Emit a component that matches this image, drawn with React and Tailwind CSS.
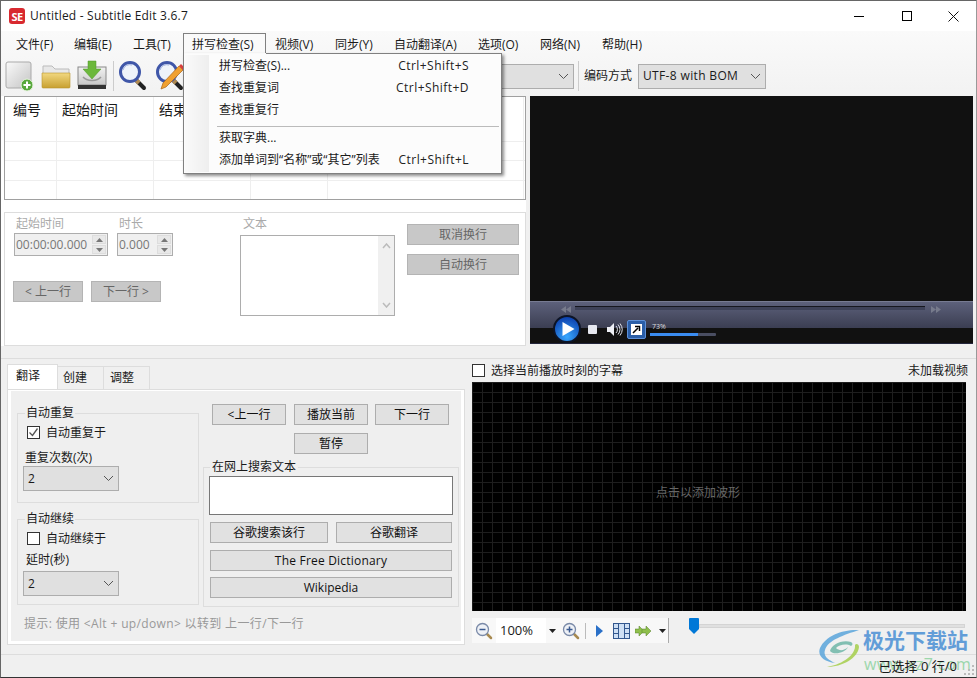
import React from 'react';

const Chevron = ({ color = '#555' }) => (
  <svg width="11" height="7" viewBox="0 0 11 7" fill="none" stroke={color} strokeWidth="1"><path d="M1 1l4.500 4.500L10 1" /></svg>
);

const Btn = ({ className = '', children }) => (
  <div className={`h-[21px] flex items-center justify-center bg-[#e1e1e1] border border-[#adadad] text-[#111] ${className}`}>{children}</div>
);

const OffBtn = ({ className = '', children }) => (
  <div className={`h-[21px] flex items-center justify-center bg-[#c8c8c8] border border-[#b4b4b4] text-[#666] ${className}`}>{children}</div>
);

const Combo = ({ className = '', children }) => (
  <div className={`flex items-center justify-between bg-[#e0e0e0] border border-[#adadad] pl-[4px] pr-[4px] ${className}`}>
    <span>{children}</span>
    <Chevron />
  </div>
);

const Check = ({ checked }) => (
  <div className="w-[13px] h-[13px] bg-white border border-[#333] flex items-center justify-center shrink-0">
    {checked && <svg width="11" height="11" viewBox="0 0 11 11" fill="none" stroke="#555" strokeWidth="1.3"><path d="M1.500 5.500l3 3 5-7" /></svg>}
  </div>
);

const Spin = ({ className = '', children }) => (
  <div className={`h-[23px] flex items-center justify-between bg-[#f0f0f0] border border-[#adadad] pl-[1px] pr-[1px] text-[12px] text-[#777] ${className}`}>
    <span>{children}</span>
    <div className="flex flex-col gap-[1px]">
      <div className="w-[14px] h-[9px] bg-[#e8e8e8] border border-[#ddd] flex items-center justify-center"><svg width="7" height="4" viewBox="0 0 7 4" fill="#777"><path d="M3.500 0L7 4H0z" /></svg></div>
      <div className="w-[14px] h-[9px] bg-[#e8e8e8] border border-[#ddd] flex items-center justify-center"><svg width="7" height="4" viewBox="0 0 7 4" fill="#777"><path d="M0 0h7L3.500 4z" /></svg></div>
    </div>
  </div>
);

const Glass = ({ pencil }) => (
  <svg width="30" height="32" viewBox="0 0 30 32">
    <path d="M18 20l8 8" stroke="#222" strokeWidth="4" strokeLinecap="round" />
    <path d="M18 20l3 3" stroke="#b08a50" strokeWidth="4" />
    <circle cx="12" cy="12" r="9.500" fill="#eef3fa" stroke="#3f56a8" strokeWidth="3" />
    <path d="M5 10a7 7 0 0 1 9-5" stroke="#9fb0e0" strokeWidth="1" fill="none" />
    {pencil && <path d="M6 29l2-6L24 6l4 4L11 27z" fill="#f0a030" stroke="#a8641a" strokeWidth="0.7" />}
    {pencil && <path d="M24 6l2-2 3 3-1 3z" fill="#d84040" />}
  </svg>
);

const menus = [
  ['文件(F)', 'w-[58px]'],
  ['编辑(E)', 'w-[59px]'],
  ['工具(T)', 'w-[58px]'],
  ['拼写检查(S)', 'w-[83px]'],
  ['视频(V)', 'ml-[1px] w-[60px]'],
  ['同步(Y)', 'w-[59px]'],
  ['自动翻译(A)', 'w-[84px]'],
  ['选项(O)', 'w-[62px]'],
  ['网络(N)', 'w-[62px]'],
  ['帮助(H)', 'w-[60px]'],
];

const MenuRow = ({ label, keys }) => (
  <div className="h-[22px] flex items-center justify-between pl-[35px] pr-[32px]">
    <span>{label}</span>
    <span className="text-[#222] tracking-[0.45px]">{keys}</span>
  </div>
);

export default function App() {
  return (
    <div className="relative w-[977px] h-[678px] overflow-hidden flex flex-col bg-[#f0f0f0] border border-[#666] border-b-[#333] border-r-[#999] text-[12px] leading-none text-[#1a1a1a] font-['Open_Sans','Noto_Sans_CJK_SC',sans-serif]">
      {/* title bar */}
      <div className="h-[30px] shrink-0 bg-white flex items-center pl-[8px]">
        <div className="w-[16px] h-[16px] rounded-[3px] bg-[#d8292f] text-white text-[11px] font-bold tracking-[-0.5px] flex items-center justify-center">SE</div>
        <span className="ml-[5px] tracking-[0.2px]">Untitled - Subtitle Edit 3.6.7</span>
        <div className="ml-auto flex items-center">
          <div className="w-[50px] flex justify-center"><div className="w-[10px] h-[1px] bg-black" /></div>
          <div className="w-[46px] flex justify-center"><div className="w-[10px] h-[10px] border border-black" /></div>
          <div className="w-[46px] flex justify-center">
            <svg width="11" height="11" viewBox="0 0 11 11" stroke="#111" strokeWidth="1"><path d="M.5.5l10 10M10.500.5l-10 10" /></svg>
          </div>
        </div>
      </div>

      <div className="shrink-0 bg-gradient-to-b from-[#fafafa] to-[#f2f2f2]">
        {/* menu bar */}
        <div className="h-[25px] flex items-end pl-[7px]">
          {menus.map(([label, w]) => (
            <div key={label} className={`h-[23px] flex items-center pl-[8px] ${w} ${label === '拼写检查(S)' ? 'border border-[#808080] border-b-0 bg-[#fafafa]' : ''}`}>{label}</div>
          ))}
        </div>

        {/* toolbar */}
        <div className="h-[40px] flex items-center pl-[4px]">
          <svg width="30" height="32" viewBox="0 0 30 32">
            <defs><linearGradient id="doc" x1="0" y1="0" x2="1" y2="1"><stop offset="0" stopColor="#fafafa" /><stop offset="1" stopColor="#c4c4c4" /></linearGradient></defs>
            <rect x="1" y="2" width="25" height="26" rx="2" fill="url(#doc)" stroke="#aaa" />
            <circle cx="22" cy="25" r="6" fill="#58a83c" stroke="#e8f4e0" />
            <path d="M22 21.500v7M18.500 25h7" stroke="#fff" strokeWidth="2" />
          </svg>
          <svg className="ml-[6px]" width="30" height="32" viewBox="0 0 30 32">
            <defs><linearGradient id="fold" x1="0" y1="0" x2="0" y2="1"><stop offset="0" stopColor="#f2d880" /><stop offset="1" stopColor="#c8a030" /></linearGradient></defs>
            <path d="M2 6h9l3 3h14v6H2z" fill="#e8e8e8" stroke="#bbb" />
            <path d="M1 13h28v14a1 1 0 0 1-1 1H2a1 1 0 0 1-1-1z" fill="url(#fold)" stroke="#b8962e" strokeWidth="0.6" />
          </svg>
          <svg className="ml-[6px]" width="30" height="32" viewBox="0 0 30 32">
            <defs><linearGradient id="tray" x1="0" y1="0" x2="0" y2="1"><stop offset="0" stopColor="#f2f2f2" /><stop offset="1" stopColor="#c8c8c8" /></linearGradient></defs>
            <rect x="1" y="7" width="28" height="18" fill="url(#tray)" stroke="#888" />
            <path d="M6 17a10 6 0 0 0 18 0" fill="none" stroke="#999" strokeWidth="1.500" />
            <rect x="1" y="25" width="28" height="4" fill="#333" />
            <path d="M11 1h8v8h5l-9 10-9-10h5z" fill="#6cb83c" stroke="#4f962a" strokeWidth="0.5" />
          </svg>
          <div className="ml-[6px] w-[1px] h-[30px] bg-[#ccc]" />
          <div className="ml-[4px]"><Glass /></div>
          <div className="ml-[7px]"><Glass pencil /></div>
          <Combo className="ml-[235px] w-[154px] h-[25px]" />
          <div className="ml-[4px] w-[1px] h-[30px] bg-[#ccc]" />
          <span className="ml-[5px] w-[54px]">编码方式</span>
          <Combo className="w-[128px] h-[25px] tracking-[0.35px]">UTF-8 with BOM</Combo>
        </div>
      </div>

      {/* subtitle list + video */}
      <div className="h-[262px] shrink-0 flex">
        <div className="w-[525px] h-[250px] bg-white pl-[3px] flex flex-col">
          <div className="w-[522px] h-[104px] border border-[#a0a0a0] bg-white flex flex-col">
            <div className="h-[25px] shrink-0 flex items-center text-[14px]">
              <div className="w-[52px] h-full pl-[8px] border-r border-[#eee] flex items-center">编号</div>
              <div className="w-[97px] h-full pl-[5px] border-r border-[#eee] flex items-center">起始时间</div>
              <div className="w-[97px] h-full pl-[5px] border-r border-[#eee] flex items-center">结束时间</div>
              <div className="w-[77px] h-full border-r border-[#eee]" />
              <div className="w-[196px] h-full border-r border-[#eee]" />
            </div>
            {[0, 1, 2, 3].map((r) => (
              <div key={r} className={`flex flex-1 border-[#eee] ${r < 3 ? 'border-b' : ''}`}>
                <div className="w-[52px] border-r border-[#eee]" />
                <div className="w-[97px] border-r border-[#eee]" />
                <div className="w-[97px] border-r border-[#eee]" />
                <div className="w-[77px] border-r border-[#eee]" />
                <div className="w-[196px] border-r border-[#eee]" />
              </div>
            ))}
          </div>

          <div className="mt-[12px] w-[522px] h-[134px] border border-[#ddd] flex pl-[9px] pt-[3px]">
            <div className="w-[220px]">
              <div className="flex text-[#aaa] h-[15px] items-center">
                <span className="ml-[2px] w-[103px]">起始时间</span>
                <span>时长</span>
              </div>
              <div className="flex mt-[2px]">
                <Spin className="w-[94px]">00:00:00.000</Spin>
                <Spin className="ml-[9px] w-[56px]">0.000</Spin>
              </div>
              <div className="flex gap-[8px] mt-[25px] -ml-[1px]">
                <OffBtn className="w-[70px]">&lt; 上一行</OffBtn>
                <OffBtn className="w-[70px]">下一行 &gt;</OffBtn>
              </div>
            </div>
            <div className="ml-[6px] w-[155px]">
              <div className="h-[15px] flex items-center pl-[3px] text-[#aaa]">文本</div>
              <div className="mt-[4px] w-[155px] h-[81px] border border-[#adadad] bg-white flex justify-end">
                <div className="w-[16px] bg-[#f0f0f0] flex flex-col items-center justify-between py-[7px]">
                  <svg width="9" height="6" viewBox="0 0 9 6" fill="none" stroke="#bbb" strokeWidth="1.500"><path d="M1 5l3.500-4L8 5" /></svg>
                  <svg width="9" height="6" viewBox="0 0 9 6" fill="none" stroke="#bbb" strokeWidth="1.500"><path d="M1 1l3.500 4L8 1" /></svg>
                </div>
              </div>
            </div>
            <div className="ml-[12px] w-[112px] pt-[8px] flex flex-col gap-[9px]">
              <OffBtn>取消换行</OffBtn>
              <OffBtn>自动换行</OffBtn>
            </div>
          </div>
        </div>

        <div className="ml-[4px] w-[443px] h-[248px] flex flex-col bg-[#111]">
          <div className="h-[205px] shrink-0" />
          <div className="h-[43px] flex flex-col">
            <div className="h-[27px] border-t border-[#777b92] bg-gradient-to-b from-[#5d617b] to-[#3b3e52] flex pt-[4px] pl-[31px] items-start">
              <svg width="10" height="7" viewBox="0 0 10 7" fill="#777b8c"><path d="M5 0v7L0 3.500zM10 0v7L5 3.500z" /></svg>
              <div className="ml-[4px] w-[350px] h-[4px] bg-[#3e4258] border-t border-[#16171f]" />
              <svg className="ml-[6px]" width="10" height="7" viewBox="0 0 10 7" fill="#777b8c"><path d="M0 0v7l5-3.500zM5 0v7l5-3.500z" /></svg>
            </div>
            <div className="flex-1 border-b border-[#24263c]" />
          </div>
        </div>
      </div>

      {/* lower pane */}
      <div className="h-[296px] shrink-0 border-t border-[#ddd] flex">
        <div className="w-[465px] h-full pl-[6px] pt-[5px] flex flex-col">
          <div className="flex items-end h-[25px]">
            <div className="w-[51px] h-[25px] bg-white border border-[#ddd] border-b-0 pl-[8px] pb-[2px] flex items-center">翻译</div>
            <div className="w-[46px] h-[23px] border-r border-t border-[#ddd] pl-[5px] flex items-center">创建</div>
            <div className="w-[46px] h-[23px] border-r border-t border-[#ddd] pl-[6px] flex items-center">调整</div>
          </div>
          <div className="w-[458px] h-[256px] border border-[#ddd] border-t-[#ddd] p-[3px] pt-[1px] bg-white">
            <div className="h-full bg-[#efefef] pl-[6px] pt-[15px] flex flex-col">
              <div className="flex">
                <div className="w-[182px] flex flex-col">
                  <fieldset className="h-[97px] border border-[#ddd] pl-[7px]">
                    <legend className="px-[1px] text-[12px] leading-[14px]">自动重复</legend>
                    <div className="flex items-center gap-[6px] ml-[2px] mt-[6px]"><Check checked /><span>自动重复于</span></div>
                    <div className="mt-[12px] h-[14px] flex items-center">重复次数(次)</div>
                    <Combo className="-ml-[2px] mt-[1px] w-[96px] h-[25px] pl-[3px]">2</Combo>
                  </fieldset>
                  <fieldset className="mt-[9px] h-[93px] border border-[#ddd] pl-[7px]">
                    <legend className="px-[1px] text-[12px] leading-[14px]">自动继续</legend>
                    <div className="flex items-center gap-[6px] ml-[2px] mt-[6px]"><Check /><span>自动继续于</span></div>
                    <div className="mt-[8px] ml-[1px] h-[14px] flex items-center">延时(秒)</div>
                    <Combo className="-ml-[2px] mt-[4px] w-[96px] h-[25px] pl-[3px]">2</Combo>
                  </fieldset>
                </div>
                <div className="ml-[4px] w-[256px] flex flex-col">
                  <div className="flex ml-[9px] -mt-[2px]">
                    <Btn className="w-[74px]">&lt;上一行</Btn>
                    <Btn className="ml-[8px] w-[74px]">播放当前</Btn>
                    <Btn className="ml-[7px] w-[74px]">下一行</Btn>
                  </div>
                  <Btn className="w-[74px] ml-[91px] mt-[8px]">暂停</Btn>
                  <fieldset className="mt-[6px] h-[147px] border border-[#ddd] px-[5px]">
                    <legend className="ml-[1px] px-[2px] text-[12px] leading-[14px]">在网上搜索文本</legend>
                    <div className="h-[39px] bg-white border border-[#777] mt-[2px]" />
                    <div className="flex gap-[8px] mt-[7px] ml-[1px]">
                      <Btn className="w-[118px]">谷歌搜索该行</Btn>
                      <Btn className="w-[116px]">谷歌翻译</Btn>
                    </div>
                    <Btn className="mt-[7px] ml-[1px] w-[242px] tracking-[0.2px]">The Free Dictionary</Btn>
                    <Btn className="mt-[6px] ml-[1px] w-[242px]">Wikipedia</Btn>
                  </fieldset>
                </div>
              </div>
              <div className="mt-[10px] ml-[7px] text-[#999] tracking-[0.35px] h-[14px] flex items-center">提示: 使用 &lt;Alt + up/down&gt; 以转到 上一行/下一行</div>
            </div>
          </div>
        </div>

        <div className="ml-[6px] w-[494px] flex flex-col">
          <div className="h-[23px] flex items-center">
            <Check />
            <span className="ml-[6px]">选择当前播放时刻的字幕</span>
            <span className="ml-auto -mr-[2px]">未加载视频</span>
          </div>
          <div className="h-[229px] bg-black bg-[linear-gradient(#1e1e1e_1px,transparent_1px),linear-gradient(90deg,#1e1e1e_1px,transparent_1px)] bg-[size:10px_10px] flex items-center justify-center pb-[8px] pr-[42px] text-[#666]">点击以添加波形</div>
          <div className="mt-[7px] flex items-start">
            <div className="w-[197px] h-[25px] bg-[#f8f8f8] flex items-center border-r border-[#aaa]">
              <svg className="ml-[3px]" width="18" height="18" viewBox="0 0 18 18">
                <path d="M11 11l5 5" stroke="#a88a50" strokeWidth="2.500" strokeLinecap="round" />
                <circle cx="7.500" cy="7.500" r="6" fill="#eef1f6" stroke="#7a8aa8" strokeWidth="1.300" />
                <path d="M4.500 7.500h6" stroke="#3a5a90" strokeWidth="1.500" />
              </svg>
              <div className="ml-[3px] w-[50px] h-full bg-white flex items-center pl-[4px] text-[13px]">100%</div>
              <svg className="ml-[3px]" width="7" height="4" viewBox="0 0 7 4"><path d="M0 0h7L3.500 4z" fill="#222" /></svg>
              <svg className="ml-[6px]" width="18" height="18" viewBox="0 0 18 18">
                <path d="M11 11l5 5" stroke="#a88a50" strokeWidth="2.500" strokeLinecap="round" />
                <circle cx="7.500" cy="7.500" r="6" fill="#eef1f6" stroke="#7a8aa8" strokeWidth="1.300" />
                <path d="M4.500 7.500h6M7.500 4.500v6" stroke="#3a5a90" strokeWidth="1.500" />
              </svg>
              <div className="ml-[5px] w-[1px] h-[16px] bg-[#bbb]" />
              <svg className="ml-[10px]" width="8" height="12" viewBox="0 0 8 12"><path d="M0 0l7 6-7 6z" fill="#2a70c8" /></svg>
              <svg className="ml-[9px]" width="17" height="16" viewBox="0 0 17 16">
                <rect x=".5" y=".5" width="16" height="15" fill="#cfe0f4" stroke="#33588f" />
                <path d="M5.500 0v16M11.500 0v16M0 5.500h5M0 10.500h5M12 5.500h5M12 10.500h5" stroke="#33588f" />
              </svg>
              <svg className="ml-[5px]" width="17" height="12" viewBox="0 0 17 12">
                <path d="M0 4h4V1l5 5-5 5V8H0z" fill="#8fbf4c" stroke="#56802a" strokeWidth="0.5" />
                <path d="M7 4h4V1l5 5-5 5V8H7z" fill="#8fbf4c" stroke="#56802a" strokeWidth="0.5" />
              </svg>
              <svg className="ml-[7px]" width="7" height="4" viewBox="0 0 7 4"><path d="M0 0h7L3.500 4z" fill="#222" /></svg>
            </div>
            <div className="ml-[20px] flex items-start">
              <svg width="10" height="16" viewBox="0 0 10 16"><path d="M0 1a1 1 0 0 1 1-1h8a1 1 0 0 1 1 1v10l-5 5-5-5z" fill="#0078d7" /></svg>
              <div className="mt-[6px] w-[266px] h-[4px] bg-[#e0e0e0] border border-[#d4d4d4]" />
            </div>
          </div>
        </div>
      </div>

      {/* status bar */}
      <div className="flex-1 border-t border-[#ddd] flex items-center justify-end pr-[19px] text-[13px]">
        <span className="relative z-10">已选择 0 行/0</span>
      </div>

      {/* video controls over the player */}
      <div className="absolute left-[552px] top-[314px] flex items-center">
        <svg width="28" height="28" viewBox="0 0 28 28">
          <defs><radialGradient id="play" cx="0.5" cy="0.8" r="0.8"><stop offset="0" stopColor="#38a8ff" /><stop offset="1" stopColor="#0a3aa8" /></radialGradient></defs>
          <circle cx="14" cy="14" r="13" fill="url(#play)" stroke="#0d1426" strokeWidth="2" />
          <path d="M9.500 7l12 7-12 7z" fill="#fff" />
        </svg>
        <div className="ml-[7px] w-[9px] h-[9px] bg-[#e6e8f0] rounded-[1px]" />
        <svg className="ml-[10px]" width="16" height="13" viewBox="0 0 16 13">
          <path d="M0 4h3l4-4v13L3 9H0z" fill="#eef0f6" />
          <path d="M9 3a5 5 0 0 1 0 7M11 1.500a8 8 0 0 1 0 10M13 .5a10 10 0 0 1 0 12" fill="none" stroke="#dfe2ec" strokeWidth="1" />
        </svg>
        <div className="ml-[4px] w-[19px] h-[19px] bg-[#2a5ea8] border border-[#5d90d8] rounded-[2px] flex items-center justify-center">
          <svg width="11" height="11" viewBox="0 0 11 11"><rect width="11" height="11" fill="#fff" /><path d="M2 9l5-5M4 2.500h4.500V7" stroke="#000" strokeWidth="1.500" fill="none" /></svg>
        </div>
        <div className="ml-[4px] w-[66px] flex flex-col">
          <span className="ml-[2px] text-[7px] leading-[8px] text-[#ddd]">73%</span>
          <div className="mt-[2px] h-[3px] bg-[#4a4e62] rounded-[1px]"><div className="w-[48px] h-full bg-[#3a8cf0]" /></div>
        </div>
      </div>

      {/* open menu */}
      <div className="absolute left-[182px] top-[52px] w-[319px] h-[121px] bg-[#fcfcfc] border border-[#808080] shadow-[2px_2px_3px_rgba(0,0,0,0.45)] py-[1px]">
        <div className="absolute left-0 -top-[1px] w-[82px] h-[1px] bg-[#fafafa]" />
        <div className="absolute left-[1px] top-[1px] bottom-[1px] w-[24px] bg-gradient-to-r from-[#fafafa] to-[#eeeeee]" />
        <div className="relative">
          <MenuRow label="拼写检查(S)..." keys="Ctrl+Shift+S" />
          <MenuRow label="查找重复词" keys="Ctrl+Shift+D" />
          <MenuRow label="查找重复行" />
          <div className="ml-[33px] mr-[2px] mt-[5px] h-[1px] bg-[#bbb]" />
          <MenuRow label="获取字典..." />
          <MenuRow label="添加单词到“名称”或“其它”列表" keys="Ctrl+Shift+L" />
        </div>
      </div>

      {/* watermark */}
      <div className="absolute left-[817px] top-[626px] flex items-start pointer-events-none opacity-85">
        <svg width="42" height="40" viewBox="0 0 42 40">
          <path d="M41 3C26 2 8 8 2 21c-3 8 4 14 15 15-7-3-12-7-10-13C10 13 26 8 41 3z" fill="#5aa5dc" />
          <path d="M12 24c1-6 12-12 21-9 2 1 2 3 0 4-5-3-12-1-15 2 3 3 8 3 12-1-2 5-14 9-18 4z" fill="#6fb7a8" />
          <path d="M37 18c1 9-11 19-28 22 15 0 31-9 32-20 0-3-3-4-4-2z" fill="#a6cf4c" />
        </svg>
        <div className="ml-[3px] flex flex-col">
          <span className="text-[21px] leading-[26px] font-bold text-[#4a8fd4]">极光下载站</span>
          <span className="mt-[3px] ml-[1px] text-[16px] leading-[16px] text-[#8ed3a0] tracking-[0.4px]">www.xz7.com</span>
        </div>
      </div>
      <svg className="absolute right-[1px] bottom-[1px]" width="11" height="11" viewBox="0 0 11 11" fill="#bbb">
        <rect x="8" y="0" width="2" height="2" /><rect x="4" y="4" width="2" height="2" /><rect x="8" y="4" width="2" height="2" /><rect x="0" y="8" width="2" height="2" /><rect x="4" y="8" width="2" height="2" /><rect x="8" y="8" width="2" height="2" />
      </svg>
    </div>
  );
}
